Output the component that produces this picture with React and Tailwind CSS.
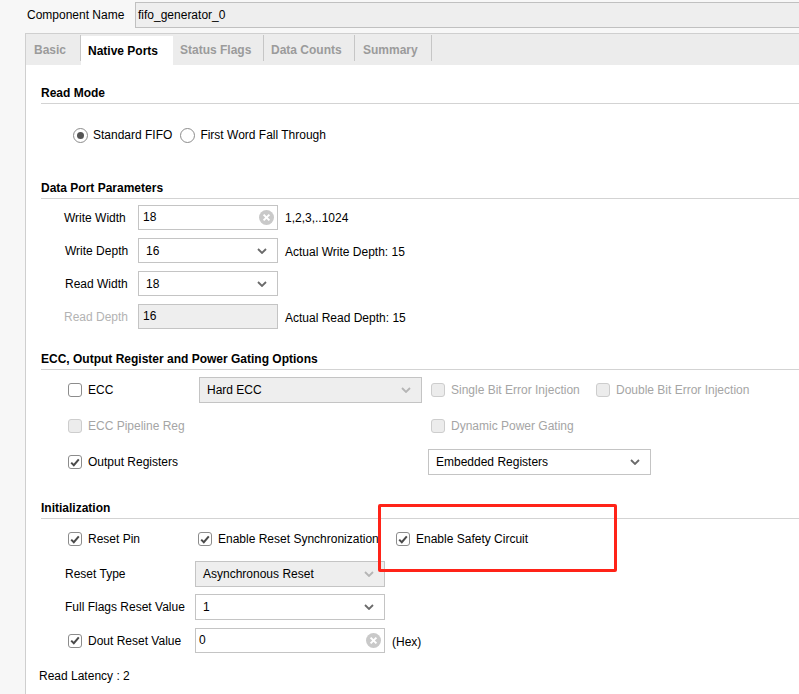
import React from 'react';

const font = { fontFamily: '"Liberation Sans", Arial, sans-serif' };

function Chevron({ muted }) {
  return (
    <svg width="10" height="6" viewBox="0 0 10 6" className="shrink-0">
      <path d="M1 1 L5 5 L9 1" fill="none" stroke={muted ? '#b5b5b5' : '#6a6a6a'} strokeWidth="1.8" />
    </svg>
  );
}

function ClearIcon() {
  return (
    <svg width="15" height="15" viewBox="0 0 15 15" className="shrink-0">
      <circle cx="7.5" cy="7.5" r="7.5" fill="#c9c9c9" />
      <path d="M4.6 4.6 L10.4 10.4 M10.4 4.6 L4.6 10.4" stroke="#fff" strokeWidth="2" />
    </svg>
  );
}

function Checkbox({ checked, disabled }) {
  return (
    <span
      className={`flex h-[14px] w-[14px] shrink-0 items-center justify-center rounded-[3px] border ${
        disabled ? 'border-[#cdcdcd] bg-[#ececec]' : 'border-[#8c8c8c] bg-white'
      }`}
    >
      {checked && (
        <svg width="10" height="9" viewBox="0 0 10 9">
          <path d="M1.2 4.6 L3.8 7.2 L8.8 1.4" fill="none" stroke="#4a4a4a" strokeWidth="2" />
        </svg>
      )}
    </span>
  );
}

function CheckItem({ label, checked, disabled, className = '' }) {
  return (
    <div className={`flex items-center gap-[6px] ${className}`}>
      <Checkbox checked={checked} disabled={disabled} />
      <span className={disabled ? 'text-[#a5a5a5]' : 'text-black'}>{label}</span>
    </div>
  );
}

function Radio({ label, selected }) {
  return (
    <div className="flex items-center gap-[5px]">
      <span className="flex h-[15px] w-[15px] items-center justify-center rounded-full border border-[#8c8c8c] bg-white">
        {selected && <span className="h-[7px] w-[7px] rounded-full bg-[#555]" />}
      </span>
      <span>{label}</span>
    </div>
  );
}

function Select({ value, width, muted, height = 'h-[26px]' }) {
  return (
    <div
      className={`flex items-center justify-between border border-[#c4c4c4] pl-[7px] pr-[10px] ${height} ${
        muted ? 'bg-[#eeeeee]' : 'bg-white'
      } ${width}`}
    >
      <span>{value}</span>
      <Chevron muted={muted} />
    </div>
  );
}

function TextBox({ value, width, clear, muted, pad = 'pl-[4px]' }) {
  return (
    <div
      className={`flex h-[25px] items-center justify-between border border-[#c4c4c4] pr-[3px] ${pad} ${
        muted ? 'bg-[#eeeeee]' : 'bg-white'
      } ${width}`}
    >
      <span className="-mt-[2px]">{value}</span>
      {clear && <ClearIcon />}
    </div>
  );
}

function SectionHeader({ title, pt }) {
  return (
    <div className={`border-b border-[#d3d3d3] pb-[3px] font-bold leading-[14px] ${pt}`}>{title}</div>
  );
}

const tabs = [
  { label: 'Basic', w: 'w-[55px] pl-[8px]' },
  { label: 'Native Ports', w: 'w-[92px] pl-[7px]', active: true },
  { label: 'Status Flags', w: 'w-[91px] pl-[7px]' },
  { label: 'Data Counts', w: 'w-[91px] pl-[7px]' },
  { label: 'Summary', w: 'w-[77px] pl-[8px]' },
];

export default function App() {
  return (
    <div className="relative h-[694px] w-[799px] overflow-hidden bg-[#f7f7f7] text-[12px] text-black" style={font}>
      {/* component name */}
      <div className="flex h-[28px] items-start pt-[2px]">
        <span className="ml-[27px] mt-[4px] w-[108px] shrink-0">Component Name</span>
        <div className="flex h-[26px] w-[700px] shrink-0 items-center border border-[#c0c0c0] bg-[#eeeeee] pb-[1px] pl-[2px]">
          fifo_generator_0
        </div>
      </div>

      <div className="ml-[25px] mt-[5px] border-l border-[#cfcfcf]">
        {/* tab bar */}
        <div className="flex h-[32px] items-end border-t border-[#cfcfcf] bg-[#ececec]">
          {tabs.map((t) =>
            t.active ? (
              <div key={t.label} className={`flex h-[29px] items-center bg-white font-bold text-black ${t.w}`}>
                {t.label}
              </div>
            ) : (
              <div
                key={t.label}
                className={`mb-[4px] flex h-[26px] shrink-0 items-center border-r border-[#c6c6c6] pt-[4px] ${t.w}`}
              >
                <span className="whitespace-nowrap font-bold text-[#9b9b9b]">{t.label}</span>
              </div>
            )
          )}
        </div>

        {/* content */}
        <div className="h-[640px] bg-white">
          <div className="ml-[15px]">
            {/* Read mode */}
            <SectionHeader title="Read Mode" pt="pt-[21px]" />
            <div className="mt-[21px] flex h-[20px] items-center gap-[8px] pl-[32px]">
              <Radio label="Standard FIFO" selected />
              <Radio label="First Word Fall Through" />
            </div>

            {/* Data port */}
            <SectionHeader title="Data Port Parameters" pt="pt-[36px]" />
            <div className="mt-[6px] flex flex-col gap-[8px] pl-[23px]">
              <div className="flex items-center">
                <span className="w-[74px]">Write Width</span>
                <TextBox value="18" width="w-[140px]" clear />
                <span className="ml-[7px]">1,2,3,..1024</span>
              </div>
              <div className="flex items-center">
                <span className="w-[74px] pl-[1px]">Write Depth</span>
                <Select value="16" width="w-[140px]" height="h-[25px]" />
                <span className="ml-[7px] mt-[2px]">Actual Write Depth: 15</span>
              </div>
              <div className="flex items-center">
                <span className="w-[74px] pl-[1px]">Read Width</span>
                <Select value="18" width="w-[140px]" height="h-[25px]" />
              </div>
              <div className="flex items-center">
                <span className="w-[74px] text-[#b3b3b3]">Read Depth</span>
                <TextBox value="16" width="w-[140px]" muted />
                <span className="ml-[7px] mt-[2px]">Actual Read Depth: 15</span>
              </div>
            </div>

            {/* ECC */}
            <SectionHeader title="ECC, Output Register and Power Gating Options" pt="pt-[23px]" />
            <div className="mt-[7px] flex flex-col gap-[10px] pl-[27px]">
              <div className="flex items-center">
                <CheckItem label="ECC" className="w-[131px]" />
                <Select value="Hard ECC" width="w-[223px]" muted />
                <CheckItem label="Single Bit Error Injection" disabled className="ml-[9px] w-[165px]" />
                <CheckItem label="Double Bit Error Injection" disabled />
              </div>
              <div className="flex h-[26px] items-center">
                <CheckItem label="ECC Pipeline Reg" disabled className="w-[363px]" />
                <CheckItem label="Dynamic Power Gating" disabled />
              </div>
              <div className="flex items-center">
                <CheckItem label="Output Registers" checked className="w-[360px]" />
                <Select value="Embedded Registers" width="w-[223px]" />
              </div>
            </div>

            {/* Initialization */}
            <SectionHeader title="Initialization" pt="pt-[26px]" />
            <div className="mt-[11px] flex flex-col pl-[24px]">
              <div className="flex h-[18px] items-center pl-[3px]">
                <CheckItem label="Reset Pin" checked className="w-[130px]" />
                <CheckItem label="Enable Reset Synchronization" checked className="w-[198px]" />
                <CheckItem label="Enable Safety Circuit" checked />
              </div>
              <div className="mt-[13px] flex items-center">
                <span className="w-[130px]">Reset Type</span>
                <Select value="Asynchronous Reset" width="w-[190px]" muted />
              </div>
              <div className="mt-[7px] flex items-center">
                <span className="w-[130px]">Full Flags Reset Value</span>
                <Select value="1" width="w-[190px]" />
              </div>
              <div className="mt-[8px] flex items-center">
                <CheckItem label="Dout Reset Value" checked className="w-[130px] pl-[3px]" />
                <TextBox value="0" width="w-[190px]" clear pad="pl-[3px]" />
                <span className="ml-[7px] mt-[3px]">(Hex)</span>
              </div>
            </div>
            <div className="-ml-[2px] mt-[14px]">Read Latency : 2</div>
          </div>
        </div>
      </div>

      {/* annotation box */}
      <div className="absolute left-[378px] top-[504px] h-[68px] w-[239px] rounded-[2px] border-[3px] border-[#ff2318]" />
    </div>
  );
}
